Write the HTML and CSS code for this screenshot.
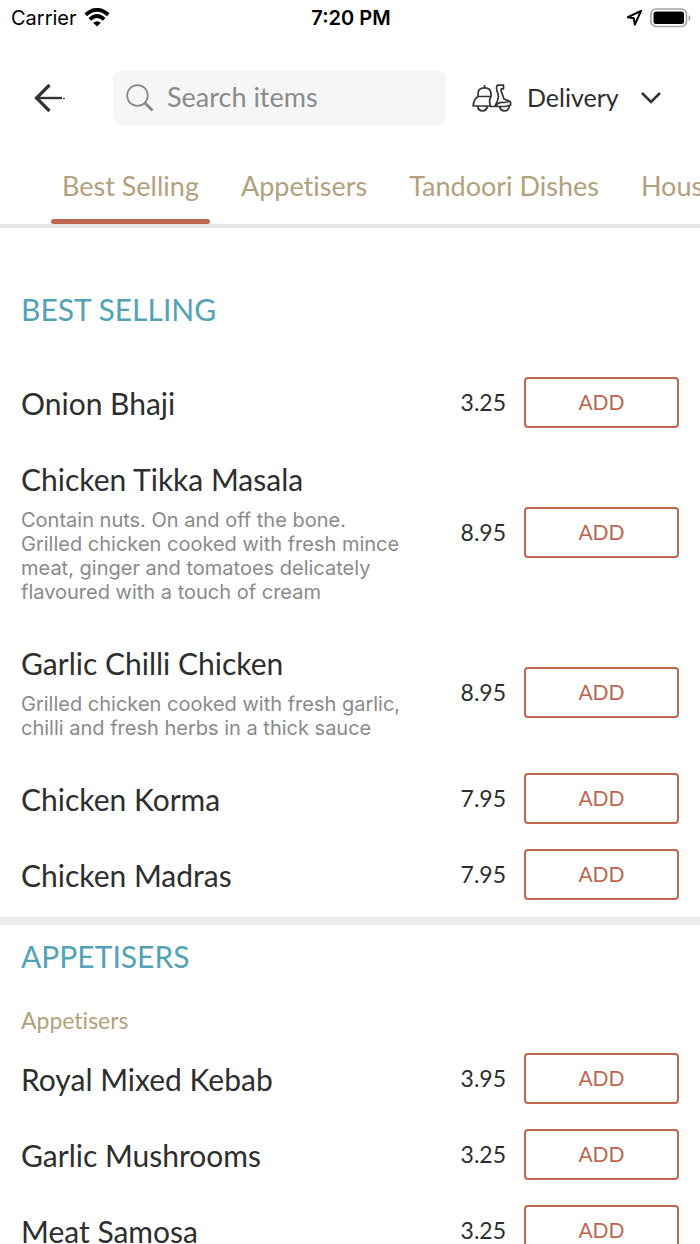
FILE: index.html
```html
<!DOCTYPE html>
<html lang="en">
<head>
<meta charset="utf-8">
<meta name="viewport" content="width=device-width, initial-scale=1">
<title>Menu</title>
<link rel="stylesheet" href="styles.css">
</head>
<body>
<div class="status">
  <div class="status-left">
    <span>Carrier</span>
    <svg width="26" height="20" viewBox="0 0 26 20" aria-hidden="true">
      <g fill="none" stroke="#000" stroke-width="3.8">
        <path d="M1.700 6.700Q13-3 24.300 6.700"/>
        <path d="M5.800 11.400Q13 4.800 20.200 11.400"/>
      </g>
      <path d="M13 18.500 9.200 14.800Q13 11.500 16.800 14.800Z"/>
    </svg>
  </div>
  <time class="clock">7:20 PM</time>
  <div class="status-right">
    <svg width="17" height="18" viewBox="0 0 17 18" aria-hidden="true">
      <path d="M15 2 1.800 8.200l6 1.100 1 6.300z" fill="none" stroke="#000" stroke-width="2" stroke-linejoin="round"/>
    </svg>
    <svg width="41" height="20" viewBox="0 0 41 20" aria-hidden="true">
      <rect x="1" y="1" width="35.500" height="17.500" rx="5" fill="none" stroke="#a3a3a3" stroke-width="1.600"/>
      <rect x="3.500" y="3.500" width="30.500" height="12.500" rx="2.500"/>
      <path d="M38.500 7v6q2-1 2-3t-2-3" fill="#a3a3a3"/>
    </svg>
  </div>
</div>

<header class="toolbar">
  <button class="back" type="button" aria-label="Back">
    <svg width="32" height="30" viewBox="0 0 32 30" fill="none" stroke="#333" aria-hidden="true">
      <path d="M15.500 2 2.500 15l13 13" stroke-width="3.200"/>
      <path d="M2.500 15H28" stroke-width="2.400"/>
      <path d="M29 15.500h2" stroke-width="1"/>
    </svg>
  </button>
  <label class="search">
    <svg width="28" height="28" viewBox="0 0 28 28" fill="none" stroke="#888" aria-hidden="true">
      <circle cx="11.500" cy="11.500" r="10.300" stroke-width="1.700"/>
      <path d="m18.500 18.500 8 8" stroke-width="2.800"/>
    </svg>
    <input type="search" placeholder="Search items" aria-label="Search items">
  </label>
  <div class="mode">
    <svg width="40" height="28" viewBox="0 0 40 28" fill="none" stroke="#333" stroke-width="1.700" stroke-linejoin="round" aria-hidden="true">
      <path d="M12.500 1v3M6 12.500V10Q6 3.800 12.500 3.800T19 10v2.500zM6 12.500Q1.500 15.500 1.200 22H18M19 12.500q-2.500 4-.500 9.500"/>
      <path d="M5.500 22q.800 4.800 5 4.800t5-4.800"/>
      <path d="M25 1.200h6.500v3.600h-2.300l-.200 1.700 3 8.500 6 2.500q1 1 .500 3.500l-4.500 1.500H18M25 1.200q-1 4 .500 7l1 4q-.500 5-3.500 9.800M24 22q2-4.500 8-3.500l5.500-1"/>
      <path d="M27.500 22q.800 4.800 5 4.800t5-5"/>
    </svg>
    <div class="picker">
      <select aria-label="Order type"><option>Delivery</option><option>Collection</option></select>
      <svg class="chevron" width="20" height="14" viewBox="0 0 20 14" fill="none" stroke="#333" stroke-width="2.600" aria-hidden="true"><path d="m1 2 9 9 9-9"/></svg>
    </div>
  </div>
</header>

<nav class="tabs" aria-label="Menu categories">
  <a class="tab active" href="#best">Best Selling</a>
  <a class="tab" href="#appetisers">Appetisers</a>
  <a class="tab" href="#tandoori">Tandoori Dishes</a>
  <a class="tab" href="#house">House</a>
</nav>

<main>
  <section class="group first" id="best">
    <h2>BEST SELLING</h2>
    <article class="item"><div class="info"><h3>Onion Bhaji</h3></div><span class="price">3.25</span><button class="add" type="button">ADD</button></article>
    <article class="item"><div class="info"><h3>Chicken Tikka Masala</h3><p>Contain nuts. On and off the bone. Grilled chicken cooked with fresh mince meat, ginger and tomatoes delicately flavoured with a touch of cream</p></div><span class="price">8.95</span><button class="add" type="button">ADD</button></article>
    <article class="item"><div class="info"><h3>Garlic Chilli Chicken</h3><p>Grilled chicken cooked with fresh garlic, chilli and fresh herbs in a thick sauce</p></div><span class="price">8.95</span><button class="add" type="button">ADD</button></article>
    <article class="item"><div class="info"><h3>Chicken Korma</h3></div><span class="price">7.95</span><button class="add" type="button">ADD</button></article>
    <article class="item"><div class="info"><h3>Chicken Madras</h3></div><span class="price">7.95</span><button class="add" type="button">ADD</button></article>
  </section>
  <section class="group" id="appetisers">
    <h2>APPETISERS</h2>
    <p class="sub">Appetisers</p>
    <article class="item"><div class="info"><h3>Royal Mixed Kebab</h3></div><span class="price">3.95</span><button class="add" type="button">ADD</button></article>
    <article class="item"><div class="info"><h3>Garlic Mushrooms</h3></div><span class="price">3.25</span><button class="add" type="button">ADD</button></article>
    <article class="item"><div class="info"><h3>Meat Samosa</h3></div><span class="price">3.25</span><button class="add" type="button">ADD</button></article>
  </section>
</main>
</body>
</html>
```
FILE: styles.css
```css
* { box-sizing: border-box; }
html { scrollbar-width: none; }
body {
  margin: 0;
  background: #fff;
  color: #2e2e2e;
  font-family: Lato, "Open Sans", sans-serif;
  font-variant-ligatures: none;
  overflow-x: hidden;
}
h2, h3, p { margin: 0; font-weight: 400; }
svg { display: block; flex: none; }
button, input, select { font: inherit; color: inherit; }

.status {
  display: grid;
  grid-template-columns: 1fr auto 1fr;
  align-items: center;
  height: 36px;
  padding: 0 9px 0 11px;
  color: #000;
  font: 20px/24px Inter, sans-serif;
}
.status-left, .status-right { display: flex; align-items: center; gap: 7px; }
.status-right { justify-content: flex-end; }
.clock { font-weight: 600; }

.toolbar {
  display: flex;
  align-items: center;
  padding: 35px 39px 0 34px;
}
.back { border: 0; background: none; padding: 0; margin-right: 47px; }
.search {
  flex: 1;
  min-width: 0;
  display: flex;
  align-items: center;
  gap: 13px;
  height: 54px;
  padding: 0 13px;
  border-radius: 8px;
  background: #f6f6f6;
}
.search input {
  flex: 1;
  min-width: 0;
  border: 0;
  padding: 0 0 3px;
  background: none;
  outline: 0;
  font-size: 27px;
  appearance: none;
}
.search input::placeholder { color: #8a8a8a; opacity: 1; }
.mode { display: flex; align-items: center; gap: 15px; margin-left: 26px; }
.picker { display: grid; align-items: center; width: 134px; }
.picker select {
  grid-area: 1 / 1;
  appearance: none;
  border: 0;
  padding: 0 0 2px;
  background: none;
  font-size: 25px;
  line-height: 32px;
}
.chevron { grid-area: 1 / 1; justify-self: end; pointer-events: none; }

.tabs {
  display: flex;
  gap: 20px;
  margin-top: 23px;
  padding-left: 51px;
  border-bottom: 4px solid #e6e6e6;
  overflow: hidden;
}
.tab {
  flex: none;
  height: 76px;
  padding: 20px 11px 0;
  color: #b3a17d;
  font-size: 27px;
  line-height: 36px;
  text-decoration: none;
}
.tab::after {
  content: "";
  display: block;
  height: 5px;
  margin: 15px -11px 0;
  border-radius: 3px;
}
.active::after { background: #bd6652; }

.group { padding: 13px 21px 5px; }
.group + .group { border-top: 8px solid #ededed; }
.first { padding-top: 63px; }
h2 { color: #52a3b8; font-size: 30px; line-height: 36px; }
.first h2 { margin-bottom: 37px; }
.sub { margin: 30px 0 4px; color: #b3a17d; font-size: 23px; line-height: 32px; }
.item {
  display: grid;
  grid-template-columns: 1fr auto 155px;
  align-items: center;
  padding: 12px 0;
}
.info { max-width: 390px; padding: 9px 0 7px; }
h3 { font-size: 30px; line-height: 36px; }
.info p {
  margin: 11px 0 1px;
  color: #8a8a8a;
  font: 20px/24px Inter, sans-serif;
}
.price { margin-right: 18px; font-size: 23px; }
.add {
  height: 51px;
  padding: 0 0 2px;
  border: 2px solid #bd6652;
  border-radius: 4px;
  background: #fff;
  color: #bd6652;
  font-size: 21px;
}
```
